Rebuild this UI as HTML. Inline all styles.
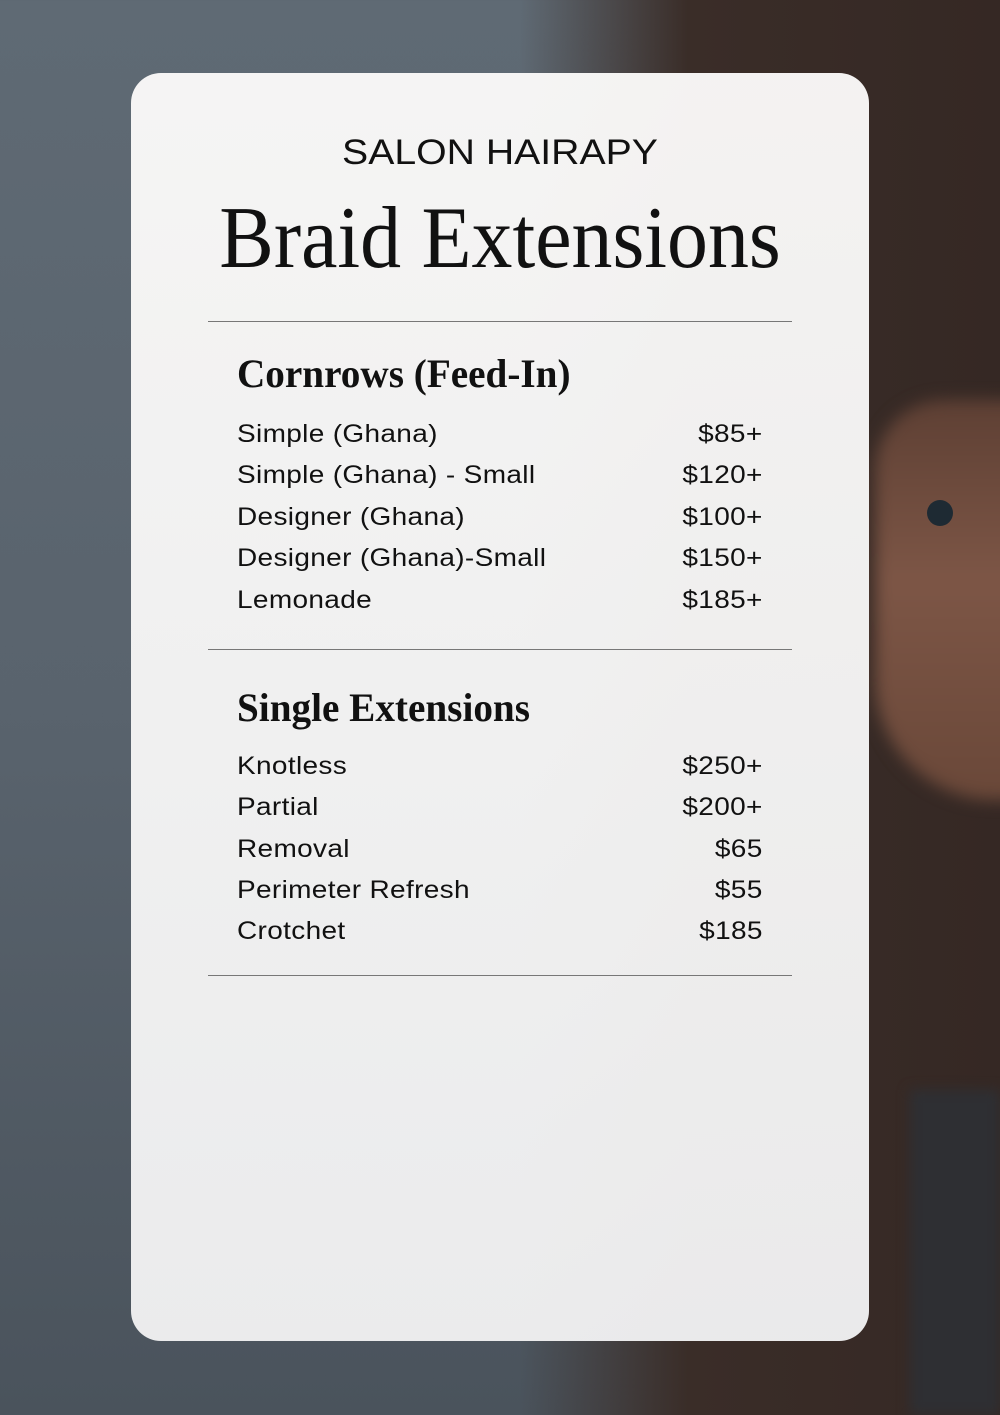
<!DOCTYPE html>
<html><head><style>
html,body{margin:0;padding:0}
body{width:1000px;height:1415px;position:relative;overflow:hidden;
background:linear-gradient(180deg,#5f6a74 0%,#59636d 50%,#4a535c 100%);font-family:"Liberation Sans",sans-serif;color:#111}
.hair{position:absolute;left:520px;top:0;width:480px;height:1415px;
background:linear-gradient(90deg,rgba(58,45,40,0) 0%,#3a2d28 35%,#352824 100%);}
.skin{position:absolute;left:875px;top:400px;width:150px;height:400px;border-radius:70px 0 0 120px;
background:linear-gradient(180deg,#5e4034,#7d5646 45%,#6a4839);filter:blur(8px)}
.shirt{position:absolute;left:910px;top:1090px;width:90px;height:325px;background:#2e2f33;filter:blur(6px)}
.ear{position:absolute;left:927px;top:500px;width:26px;height:26px;border-radius:50%;background:#1e2a33}
.card{position:absolute;left:131px;top:73px;width:738px;height:1268px;border-radius:30px;
background:linear-gradient(180deg,rgba(250,249,248,.97),rgba(243,243,243,.97) 70%,rgba(240,240,241,.97));}
.t1{position:absolute;top:133px;left:0;width:1000px;text-align:center;font-size:35px;transform:scaleX(1.12);}
.t2{position:absolute;top:188px;left:0;width:1000px;text-align:center;font-family:"Liberation Serif",serif;font-size:88px;transform:scaleX(.93);}
.hr{position:absolute;left:208px;width:584px;height:1px;background:#777}
.h{position:absolute;left:237px;font-family:"Liberation Serif",serif;font-weight:bold;font-size:40px;transform-origin:left;transform:scaleX(.98)}
.row{position:absolute;left:237px;width:526px;font-size:25px;display:flex;justify-content:space-between;letter-spacing:.3px}
.row span{display:inline-block;transform-origin:left;transform:scaleX(1.12)}
.row span:last-child{transform-origin:right}
</style></head><body>
<div class="hair"></div><div class="skin"></div><div class="shirt"></div><div class="ear"></div>
<div class="card"></div>
<div class="t1">SALON HAIRAPY</div>
<div class="t2">Braid Extensions</div>
<div class="hr" style="top:321px"></div>
<div class="h" style="top:350px">Cornrows (Feed-In)</div>
<div class="row" style="top:420px"><span>Simple (Ghana)</span><span>$85+</span></div>
<div class="row" style="top:461px"><span>Simple (Ghana) - Small</span><span>$120+</span></div>
<div class="row" style="top:503px"><span>Designer (Ghana)</span><span>$100+</span></div>
<div class="row" style="top:544px"><span>Designer (Ghana)-Small</span><span>$150+</span></div>
<div class="row" style="top:586px"><span>Lemonade</span><span>$185+</span></div>
<div class="hr" style="top:649px"></div>
<div class="h" style="top:684px">Single Extensions</div>
<div class="row" style="top:752px"><span>Knotless</span><span>$250+</span></div>
<div class="row" style="top:793px"><span>Partial</span><span>$200+</span></div>
<div class="row" style="top:835px"><span>Removal</span><span>$65</span></div>
<div class="row" style="top:876px"><span>Perimeter Refresh</span><span>$55</span></div>
<div class="row" style="top:917px"><span>Crotchet</span><span>$185</span></div>
<div class="hr" style="top:975px"></div>
</body></html>
